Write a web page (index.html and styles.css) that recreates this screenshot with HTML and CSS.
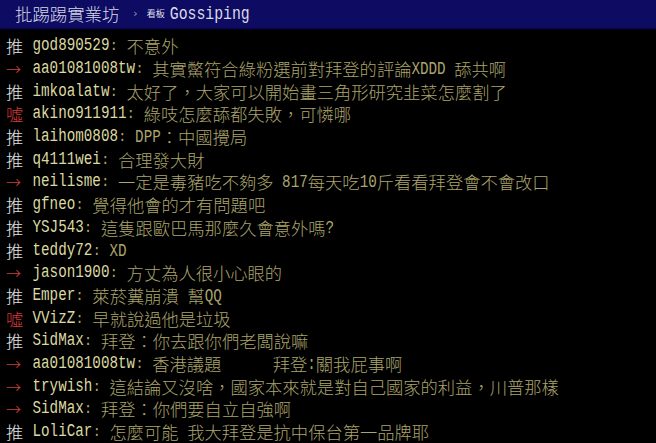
FILE: index.html
```html
<!DOCTYPE html>
<html lang="zh-Hant">
<head>
<meta charset="utf-8">
<title>批踢踢實業坊 › 看板 Gossiping</title>
<link rel="stylesheet" href="styles.css">
</head>
<body>
<header class="topbar">
  <span class="site">批踢踢實業坊</span>
  <span class="sep">›</span>
  <span class="board-label">看板</span>
  <span class="board">Gossiping</span>
</header>
<main class="pushes">
  <div class="push"><span class="tag good">推</span><span class="uid">god890529</span><span class="colon">:</span><span class="msg">不意外</span></div>
  <div class="push"><span class="tag arrow">→</span><span class="uid">aa01081008tw</span><span class="colon">:</span><span class="msg">其實鱉符合綠粉選前對拜登的評論<span class="l">XDDD </span>舔共啊</span></div>
  <div class="push"><span class="tag good">推</span><span class="uid">imkoalatw</span><span class="colon">:</span><span class="msg">太好了，大家可以開始畫三角形研究韭菜怎麼割了</span></div>
  <div class="push"><span class="tag boo">噓</span><span class="uid">akino911911</span><span class="colon">:</span><span class="msg">綠吱怎麼舔都失敗，可憐哪</span></div>
  <div class="push"><span class="tag good">推</span><span class="uid">laihom0808</span><span class="colon">:</span><span class="msg"><span class="l">DPP</span>：中國攪局</span></div>
  <div class="push"><span class="tag good">推</span><span class="uid">q4111wei</span><span class="colon">:</span><span class="msg">合理發大財</span></div>
  <div class="push"><span class="tag arrow">→</span><span class="uid">neilisme</span><span class="colon">:</span><span class="msg">一定是毒豬吃不夠多<span class="l"> 817</span>每天吃<span class="l">10</span>斤看看拜登會不會改口</span></div>
  <div class="push"><span class="tag good">推</span><span class="uid">gfneo</span><span class="colon">:</span><span class="msg">覺得他會的才有問題吧</span></div>
  <div class="push"><span class="tag good">推</span><span class="uid">YSJ543</span><span class="colon">:</span><span class="msg">這隻跟歐巴馬那麼久會意外嗎<span class="l">?</span></span></div>
  <div class="push"><span class="tag good">推</span><span class="uid">teddy72</span><span class="colon">:</span><span class="msg"><span class="l">XD</span></span></div>
  <div class="push"><span class="tag arrow">→</span><span class="uid">jason1900</span><span class="colon">:</span><span class="msg">方丈為人很小心眼的</span></div>
  <div class="push"><span class="tag good">推</span><span class="uid">Emper</span><span class="colon">:</span><span class="msg">萊菸糞崩潰<span class="l"> </span>幫<span class="l">QQ</span></span></div>
  <div class="push"><span class="tag boo">噓</span><span class="uid">VVizZ</span><span class="colon">:</span><span class="msg">早就說過他是垃圾</span></div>
  <div class="push"><span class="tag good">推</span><span class="uid">SidMax</span><span class="colon">:</span><span class="msg">拜登：你去跟你們老闆說嘛</span></div>
  <div class="push"><span class="tag arrow">→</span><span class="uid">aa01081008tw</span><span class="colon">:</span><span class="msg">香港議題<span class="l">      </span>拜登<span class="l">:</span>關我屁事啊</span></div>
  <div class="push"><span class="tag arrow">→</span><span class="uid">trywish</span><span class="colon">:</span><span class="msg">這結論又沒啥，國家本來就是對自己國家的利益，川普那樣</span></div>
  <div class="push"><span class="tag arrow">→</span><span class="uid">SidMax</span><span class="colon">:</span><span class="msg">拜登：你們要自立自強啊</span></div>
  <div class="push"><span class="tag good">推</span><span class="uid">LoliCar</span><span class="colon">:</span><span class="msg">怎麼可能<span class="l"> </span>我大拜登是抗中保台第一品牌耶</span></div>
</main>
</body>
</html>
```
FILE: styles.css
```css
html, body {
  margin: 0;
  padding: 0;
  background: #000;
}

body {
  width: 656px;
  height: 443px;
  overflow: hidden;
  font-family: "Noto Sans CJK TC", "Noto Sans CJK SC", sans-serif;
}

.topbar {
  height: 28px;
  background: #0d0b62;
  display: flex;
  align-items: center;
  padding-left: 15px;
  box-shadow: 0 1px 2px #0d0b62;
}

.site {
  font-size: 17.4px;
  line-height: 20px;
  font-weight: 300;
  color: #d8d8e4;
}

.sep {
  margin-left: 14px;
  font-family: "DejaVu Sans", sans-serif;
  font-size: 11px;
  line-height: 12px;
  color: #9a9ac0;
}

.board-label {
  margin-left: 9px;
  font-size: 9px;
  line-height: 10px;
  color: #e0e0ea;
}

.board {
  margin-left: 5px;
  font-family: "Liberation Mono", monospace;
  font-size: 14.8px;
  line-height: 14px;
  color: #dcdce8;
  display: inline-block;
  transform: scaleY(1.25);
}

.pushes {
  padding: 7px 0 0 6px;
}

.push {
  height: 22.7px;
  line-height: 20px;
  font-size: 17.3px;
  font-weight: 300;
  white-space: pre;
  display: flex;
  align-items: center;
}

.tag {
  width: 26.5px;
  flex: none;
  font-size: 17.3px;
}

.tag.good { color: #e2e2e2; }
.tag.arrow { color: #c8403e; font-size: 15px; }
.tag.boo { color: #d33a3a; }

.uid,
.colon,
.l {
  font-family: "Liberation Mono", monospace;
  font-size: 14.25px;
  line-height: 14px;
  font-weight: 400;
}

.uid {
  color: #dcd9a0;
  display: inline-block;
  transform: scaleY(1.26);
  transform-origin: 50% 80%;
}

.colon {
  color: #aaa36c;
  width: 17.1px;
  flex: none;
}

.msg {
  color: #aba46c;
}

.l {
  display: inline-block;
  vertical-align: 2px;
  transform: scaleY(1.26);
  transform-origin: 50% 80%;
}
```
